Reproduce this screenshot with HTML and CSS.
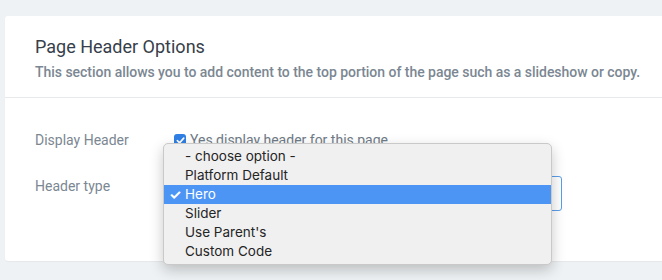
FILE: index.html
```html
<!DOCTYPE html>
<html lang="en">
<head>
  <meta charset="UTF-8">
  <title>Page Header Options</title>
  <link rel="stylesheet" href="styles.css">
</head>
<body>
  <div class="panel">
    <div class="panel-header">
      <h2 class="panel-title">Page Header Options</h2>
      <p class="panel-desc">This section allows you to add content to the top portion of the page such as a slideshow or copy.</p>
    </div>

    <div class="panel-body">
      <div class="form-row">
        <label class="form-label">Display Header</label>
        <label class="check">
          <span class="check-box">
            <svg width="9" height="9" viewBox="0 0 10 10"><path d="M1.5 5.2 L4 7.6 L8.6 2.4" fill="none" stroke="#fff" stroke-width="1.8" stroke-linecap="round" stroke-linejoin="round"/></svg>
          </span>
          Yes display header for this page
        </label>
      </div>

      <div class="form-row form-row-select">
        <label class="form-label">Header type</label>
        <div class="select-wrap">
          <div class="select-box"></div>

          <!-- open native popup -->
          <ul class="popup">
            <li>- choose option -</li>
            <li>Platform Default</li>
            <li class="selected"><span class="tick">&#10003;</span>Hero</li>
            <li>Slider</li>
            <li>Use Parent's</li>
            <li>Custom Code</li>
          </ul>
        </div>
      </div>
    </div>
  </div>
</body>
</html>
```

FILE: styles.css
```css
* {
  margin: 0;
  padding: 0;
  box-sizing: border-box;
}

body {
  background-color: #eff2f4;
  font-family: Roboto, 'Liberation Sans', sans-serif;
  padding: 16px 0 0 5px;
  min-height: 100vh;
}

.panel {
  background-color: #fff;
  border-radius: 3px 0 0 3px;
  height: 245px;
  box-shadow: 0 1px 1px rgba(0, 0, 0, 0.04);
}

.panel-header {
  padding: 19px 30px 0;
  height: 82px;
  border-bottom: 1px solid #e6eaed;
}

.panel-title {
  font-size: 18px;
  font-weight: 400;
  line-height: 24px;
  color: #36404a;
}

.panel-desc {
  font-size: 14px;
  font-weight: 500;
  line-height: 20px;
  letter-spacing: -0.03px;
  color: #7b8792;
  margin-top: 3px;
  white-space: nowrap;
}

.panel-body {
  padding: 32px 30px 0;
}

.form-row {
  display: grid;
  grid-template-columns: 139px 388px;
  align-items: center;
  height: 20px;
}

.form-label {
  font-size: 14px;
  color: #7b8792;
}

.check {
  display: flex;
  align-items: center;
  gap: 4px;
  font-size: 14px;
  color: #6f7b86;
}

.check-box {
  width: 12px;
  height: 12px;
  border-radius: 3px;
  background-color: #2f7fe6;
  display: flex;
  align-items: center;
  justify-content: center;
}

.form-row-select {
  margin-top: 26px;
  height: 35px;
  align-items: start;
}

.form-row-select .form-label {
  padding-top: 2px;
}

.select-wrap {
  position: relative;
  height: 35px;
}

.select-box {
  height: 35px;
  border: 1px solid #5a9ee8;
  border-radius: 3px;
  background-color: #fff;
}

.popup {
  position: absolute;
  left: -11px;
  top: -33px;
  width: 389px;
  list-style: none;
  background-color: #f0f0f0;
  border: 1px solid #c9c9c9;
  border-radius: 5px;
  padding: 3px 0;
  box-shadow: 0 5px 14px rgba(0, 0, 0, 0.22);
  font-family: Inter, 'Noto Sans', sans-serif;
  font-size: 13.5px;
  color: #252525;
}

.popup li {
  height: 19px;
  line-height: 19px;
  padding-left: 21px;
  position: relative;
}

.popup li.selected {
  background-color: #4d95f5;
  color: #fff;
}

.tick {
  position: absolute;
  left: 5px;
  top: 0;
  font-size: 14px;
  font-weight: 700;
}
```
